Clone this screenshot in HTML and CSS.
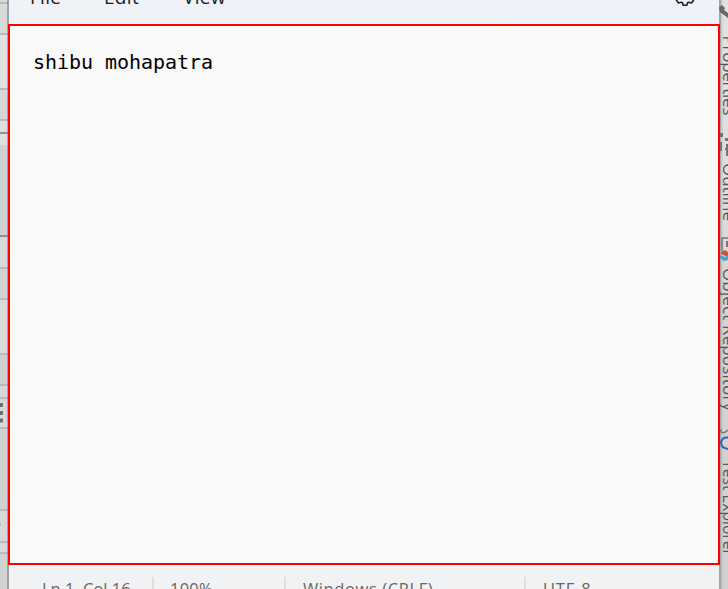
FILE: index.html
```html
<!DOCTYPE html>
<html lang="en">
<head>
<meta charset="utf-8">
<title>Notepad</title>
<link rel="stylesheet" href="styles.css">
</head>
<body>
<div class="desktop">
  <aside class="left-edge">
    <svg width="9" height="589" viewBox="0 0 9 589" shape-rendering="crispEdges">
      <rect width="9" height="34" fill="#d7dad8"/>
      <rect y="34" width="9" height="54" fill="#e2e2e2"/>
      <rect y="88" width="9" height="32" fill="#d5d8d7"/>
      <rect y="120" width="9" height="25" fill="#dfdfdf"/>
      <rect y="145" width="9" height="90" fill="#cbd1d6"/>
      <rect y="235" width="9" height="32" fill="#d9d9d9"/>
      <rect y="267" width="9" height="31" fill="#d1d3d2"/>
      <rect y="298" width="9" height="55" fill="#dadada"/>
      <rect y="353" width="9" height="31" fill="#d0d0d0"/>
      <rect y="384" width="9" height="44" fill="#d8d8d8"/>
      <rect y="428" width="9" height="81" fill="#d0d0d0"/>
      <rect y="509" width="9" height="43" fill="#d8d8d8"/>
      <rect y="552" width="9" height="37" fill="#d2d2d2"/>
      <g fill="#b9babd">
        <rect y="2" width="9" height="2"/><rect y="33" width="9" height="2"/>
        <rect y="88" width="9" height="2"/><rect y="119" width="9" height="2"/>
        <rect y="267" width="9" height="2"/><rect y="298" width="9" height="2"/>
        <rect y="353" width="9" height="2"/><rect y="384" width="9" height="2"/>
        <rect y="397" width="9" height="2"/><rect y="427" width="9" height="2"/>
        <rect y="509" width="9" height="2"/><rect y="541" width="9" height="2"/>
        <rect y="552" width="9" height="2"/>
      </g>
      <rect y="132" width="9" height="2" fill="#929292"/>
      <rect y="235" width="9" height="2" fill="#929292"/>
      <rect y="524" width="1" height="1" fill="#999"/>
      <g fill="#6c6c6c" shape-rendering="auto">
        <rect x="-1" y="403" width="4" height="4" rx="1"/>
        <rect x="-1" y="411" width="4" height="4" rx="1"/>
        <rect x="-1" y="418.500" width="4" height="4" rx="1"/>
      </g>
      <rect x="7" width="2" height="589" fill="#6e6e6e" fill-opacity=".5"/>
    </svg>
  </aside>
  <main class="window">
    <nav class="menu">
      <span class="file">File</span><span class="edit">Edit</span><span class="view">View</span>
      <svg class="gear" width="22" height="22" viewBox="-11 -11 22 22" fill="none" stroke="#222" stroke-width="1.600" stroke-linejoin="round">
        <path d="M-2-9H2L2.700-6.300 4.200-5.400 7-6.300 9.200-2.600 7.200-.8V.8L9.200 3.200 6.500 7 3.600 6.200 2.400 7 1.800 9.300H-1.800L-2.400 7-3.600 6.200-6.500 7-9.200 3.200-7.200.8V-.8L-9.200-2.600-7-6.300-4.200-5.400-2.700-6.300Z"/>
        <circle r="2.500"/>
      </svg>
    </nav>
    <section class="editor">shibu mohapatra</section>
    <footer class="status">
      <span class="cell position">Ln 1, Col 16</span>
      <span class="cell zoom">100%</span>
      <span class="cell ending">Windows (CRLF)</span>
      <span class="cell encoding">UTF-8</span>
    </footer>
  </main>
  <aside class="right-edge">
    <svg width="9" height="589" viewBox="719 0 9 589">
      <defs>
        <linearGradient id="panel" x2="0" y2="1"><stop stop-color="#e3e3e3"/><stop offset=".3" stop-color="#dedede"/><stop offset=".6" stop-color="#d3d3d3"/><stop offset="1" stop-color="#d2d2d2"/></linearGradient>
        <linearGradient id="shade"><stop stop-color="#888" stop-opacity=".45"/><stop offset="1" stop-color="#888" stop-opacity="0"/></linearGradient>
      </defs>
      <rect x="719" width="9" height="589" fill="url(#panel)"/>
      <rect x="719" width="5" height="589" fill="url(#shade)"/>
      <rect x="719" width="2" height="589" fill="#a3a5a4"/>
      <path d="M719 7.500 722 5 725 8 724 10 728 13V18L720 12Z" fill="#686868"/>
      <g class="tabs">
        <text transform="translate(722.800 35.500) rotate(90)" textLength="80">Properties</text>
        <text transform="translate(722.800 163) rotate(90)" textLength="58">Outline</text>
        <text transform="translate(722.800 268) rotate(90)" textLength="143">Object Repository</text>
        <text transform="translate(722.800 460) rotate(90)" textLength="96" lengthAdjust="spacingAndGlyphs">Test Explorer</text>
      </g>
      <g fill="#747474">
        <path d="M720 133h3v4h-3zM725 138h3v3h-3zM720 142h2v9h-2zM726 144h2v12h-2zM725 148h3v2h-3z"/>
      </g>
      <path d="M728 238H722V251" fill="none" stroke="#777" stroke-width="1.500"/>
      <path d="M726 241h2v6h-2z" fill="#777"/>
      <path d="M721 252 725 250 728 252V257L721 254Z" fill="#c95432"/>
      <path d="M720 255 725 257 728 255V260L724 261 720 258Z" fill="#45a3c9"/>
      <path d="M721 429V432Q724 434 728 430" fill="none" stroke="#777" stroke-width="1.500"/>
      <path d="M728 437.500Q722 437 721 442.500Q721 448 728 449" fill="none" stroke="#2668b5" stroke-width="2"/>
    </svg>
  </aside>
</div>
</body>
</html>
```

FILE: styles.css
```css
* { box-sizing: border-box; }
html, body { margin: 0; height: 100%; overflow: hidden; }
.desktop {
  display: grid;
  grid-template-columns: 9px 710px 9px;
  width: 728px;
  height: 589px;
  overflow: hidden;
  background: #ddd;
}
.left-edge, .right-edge { overflow: hidden; }
.left-edge svg, .right-edge svg { display: block; }
.window {
  display: grid;
  grid-template-rows: 24px 541px 24px;
  background: #f0f2f4;
}
.menu {
  display: flex;
  align-items: flex-start;
  height: 24px;
  overflow: hidden;
  background: linear-gradient(90deg, #eff2f7, #edf2fb);
  color: #1c1c1c;
  font: 19px/24px "Open Sans", "Noto Sans", sans-serif;
}
.menu span { margin-top: -15px; white-space: nowrap; }
.file { width: 74px; margin-left: 21px; letter-spacing: .3px; }
.edit { width: 79px; letter-spacing: .3px; }
.view { width: 80px; letter-spacing: .3px; }
.gear { margin: -15px 0 0 411px; flex: none; }
.editor {
  width: 712px;
  margin-left: -1px;
  padding: 22px 23px;
  border: 2px solid #f00;
  background: #f9f9f9;
  color: #000;
  font: 20px/28px "DejaVu Sans Mono", monospace;
  letter-spacing: -.04px;
  position: relative;
  z-index: 1;
}
.status {
  display: grid;
  grid-template-columns: 143px 132px 240px 195px;
  height: 24px;
  padding-top: 12px;
  overflow: hidden;
  color: #666;
  font: 16.500px/24px "Open Sans", "Noto Sans", sans-serif;
}
.cell { height: 24px; padding: 0 0 0 17px; white-space: nowrap; }
.cell + .cell { border-left: 2px solid #dcdedf; }
.position { padding-left: 33px; }
.zoom { padding-left: 16px; letter-spacing: .2px; }
.ending { letter-spacing: .6px; }
.encoding { letter-spacing: .8px; }
.tabs text {
  font: 17px "Open Sans", "Noto Sans", sans-serif;
  fill: #565656;
}
```
